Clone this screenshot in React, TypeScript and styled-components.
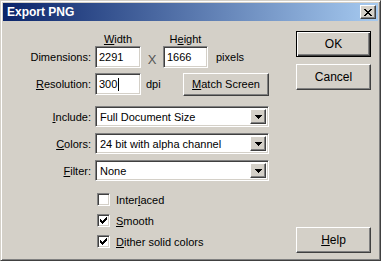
import styled, { createGlobalStyle } from "styled-components";

const Global = createGlobalStyle`
	html, body { margin: 0; padding: 0; background: #d4d0c8; }
	body {
		font-family: "Liberation Sans", Arial, sans-serif;
		font-size: 11px;
		color: #000;
	}
`;

const raised = `
	border-style: solid;
	border-width: 1px;
	border-color: #fff #404040 #404040 #fff;
	box-shadow: inset -1px -1px #808080;
`;

const sunken = `
	border-style: solid;
	border-width: 1px;
	border-color: #808080 #fff #fff #808080;
	box-shadow: inset 1px 1px #404040, inset -1px -1px #d4d0c8;
`;

const Window = styled.div`
	width: 381px;
	height: 261px;
	box-sizing: border-box;
	background: #d4d0c8;
	border: 1px solid;
	border-color: #d4d0c8 #404040 #404040 #d4d0c8;
	box-shadow: inset 1px 1px #fff, inset -1px -1px #808080;
	padding: 2px;
	display: flex;
	flex-direction: column;
`;

const TitleBar = styled.div`
	height: 18px;
	flex: none;
	display: flex;
	align-items: center;
	justify-content: space-between;
	padding: 0 2px 0 4px;
	background: linear-gradient(to right, #0a246a, #a6caf0);
	color: #fff;
	font-weight: bold;
	font-size: 12px;
`;

const CloseButton = styled.div`
	width: 16px;
	height: 14px;
	box-sizing: border-box;
	background: #d4d0c8;
	${raised}
	display: flex;
	align-items: center;
	justify-content: center;
`;

const Body = styled.div`
	flex: 1;
	display: flex;
	padding: 10px 7px 5px 0;
`;

const Form = styled.div`
	width: 266px;
	padding-top: 1px;
	display: flex;
	flex-direction: column;
`;

const Row = styled.div<{ $mt: number; $h: number }>`
	display: flex;
	align-items: center;
	margin-top: ${p => p.$mt}px;
	height: ${p => p.$h}px;
`;

const Label = styled.div`
	width: 88px;
	margin-right: 4px;
	text-align: right;
	flex: none;
`;

const ColumnHead = styled.div<{ $w: number }>`
	width: ${p => p.$w}px;
	text-align: center;
`;

const Spacer = styled.div<{ $w: number }>`
	width: ${p => p.$w}px;
	flex: none;
`;

const TextBox = styled.div<{ $w: number }>`
	width: ${p => p.$w}px;
	height: 22px;
	box-sizing: border-box;
	${sunken}
	background: #fff;
	padding-left: 3px;
	display: flex;
	align-items: center;
	flex: none;
`;

const Caret = styled.span`
	display: inline-block;
	width: 1px;
	height: 13px;
	background: #000;
	margin-left: 1px;
`;

const Times = styled.div`
	width: 22px;
	text-align: center;
	font-size: 13px;
	padding-top: 4px;
	color: #555;
`;

const Unit = styled.div<{ $ml: number }>`
	margin-left: ${p => p.$ml}px;
`;

const Button = styled.div<{ $w: number; $h: number; $default?: boolean }>`
	width: ${p => p.$w}px;
	height: ${p => p.$h}px;
	box-sizing: border-box;
	background: #d4d0c8;
	display: flex;
	align-items: center;
	justify-content: center;
	font-size: 12px;
	flex: none;
	${p => p.$default
		? `border: 1px solid #000;
		   box-shadow: inset 1px 1px #fff, inset -1px -1px #404040, inset -2px -2px #808080;`
		: raised}
`;

const MatchButton = styled(Button)`
	margin-left: auto;
	font-size: 11px;
`;

const Select = styled.div`
	flex: 1;
	height: 21px;
	box-sizing: border-box;
	${sunken}
	background: #fff;
	padding: 2px;
	display: flex;
	align-items: center;
`;

const SelectText = styled.div`
	flex: 1;
	padding-left: 2px;
`;

const DropButton = styled.div`
	width: 16px;
	height: 100%;
	box-sizing: border-box;
	background: #d4d0c8;
	${raised}
	display: flex;
	align-items: center;
	justify-content: center;
`;

const Gap = styled.div<{ $h: number }>`
	height: ${p => p.$h}px;
	flex: none;
`;

const CheckRow = styled.div`
	display: flex;
	align-items: center;
	height: 21px;
	padding-left: 94px;
`;

const CheckBox = styled.div`
	width: 13px;
	height: 13px;
	box-sizing: border-box;
	${sunken}
	background: #fff;
	display: flex;
	align-items: center;
	justify-content: center;
	margin-right: 6px;
`;

const Buttons = styled.div`
	width: 75px;
	margin-left: auto;
	display: flex;
	flex-direction: column;
	gap: 7px;
`;

const HelpButton = styled(Button)`
	margin-top: auto;
`;

function Check() {
	return (
		<svg width="7" height="7" viewBox="0 0 7 7" shapeRendering="crispEdges">
			<path d="M6 0h1v1h-1zM5 1h2v1h-2zM0 2h1v1h-1zM4 2h3v1h-3zM0 3h2v1h-2zM3 3h3v1h-3zM0 4h5v1h-5zM1 5h3v1h-3zM2 6h1v1h-1z" fill="#000" />
		</svg>
	);
}

function Arrow() {
	return (
		<svg width="7" height="4" viewBox="0 0 7 4" shapeRendering="crispEdges">
			<path d="M0 0h7v1h-7zM1 1h5v1h-5zM2 2h3v1h-3zM3 3h1v1h-1z" fill="#000" />
		</svg>
	);
}

function CloseGlyph() {
	return (
		<svg width="8" height="7" viewBox="0 0 8 7" shapeRendering="crispEdges">
			<path d="M0 0h2v1h-2zM6 0h2v1h-2zM1 1h2v1h-2zM5 1h2v1h-2zM2 2h4v1h-4zM3 3h2v1h-2zM2 4h4v1h-4zM1 5h2v1h-2zM5 5h2v1h-2zM0 6h2v1h-2zM6 6h2v1h-2z" fill="#000" />
		</svg>
	);
}

function Dropdown({ value }: { value: string }) {
	return (
		<Select>
			<SelectText>{value}</SelectText>
			<DropButton><Arrow /></DropButton>
		</Select>
	);
}

export default function App() {
	return (
		<>
			<Global />
			<Window>
				<TitleBar>
					<span>Export PNG</span>
					<CloseButton><CloseGlyph /></CloseButton>
				</TitleBar>
				<Body>
					<Form>
						<Row $mt={0} $h={13}>
							<Spacer $w={92} />
							<ColumnHead $w={46}><u>W</u>idth</ColumnHead>
							<Spacer $w={22} />
							<ColumnHead $w={45}>H<u>e</u>ight</ColumnHead>
						</Row>
						<Row $mt={1} $h={22}>
							<Label>Dimensions:</Label>
							<TextBox $w={46}>2291</TextBox>
							<Times>X</Times>
							<TextBox $w={45}>1666</TextBox>
							<Unit $ml={8}>pixels</Unit>
						</Row>
						<Row $mt={5} $h={22}>
							<Label><u>R</u>esolution:</Label>
							<TextBox $w={46}>300<Caret /></TextBox>
							<Unit $ml={5}>dpi</Unit>
							<MatchButton $w={86} $h={23}><u>M</u>atch Screen</MatchButton>
						</Row>
						<Row $mt={11} $h={21}>
							<Label><u>I</u>nclude:</Label>
							<Dropdown value="Full Document Size" />
						</Row>
						<Row $mt={6} $h={21}>
							<Label><u>C</u>olors:</Label>
							<Dropdown value="24 bit with alpha channel" />
						</Row>
						<Row $mt={6} $h={21}>
							<Label><u>F</u>ilter:</Label>
							<Dropdown value="None" />
						</Row>
						<Gap $h={8} />
						<CheckRow>
							<CheckBox />
							<span>Inter<u>l</u>aced</span>
						</CheckRow>
						<CheckRow>
							<CheckBox><Check /></CheckBox>
							<span><u>S</u>mooth</span>
						</CheckRow>
						<CheckRow>
							<CheckBox><Check /></CheckBox>
							<span><u>D</u>ither solid colors</span>
						</CheckRow>
					</Form>
					<Buttons>
						<Button $w={75} $h={26} $default>OK</Button>
						<Button $w={75} $h={26}>Cancel</Button>
						<HelpButton $w={75} $h={26}><u>H</u>elp</HelpButton>
					</Buttons>
				</Body>
			</Window>
		</>
	);
}
